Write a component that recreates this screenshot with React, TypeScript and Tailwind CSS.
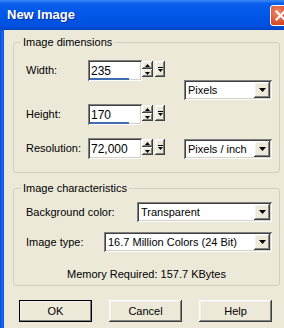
import React from "react";

const raised =
  "bg-[#ECE9D8] shadow-[inset_-1px_-1px_#404040,inset_1px_1px_#ffffff,inset_-2px_-2px_#808080,inset_2px_2px_#F4F2EA]";
const sunken =
  "bg-white shadow-[inset_1px_1px_#808080,inset_-1px_-1px_#ffffff,inset_2px_2px_#404040,inset_-2px_-2px_#D4D0C8]";

function Tri({ up = false, w = 5, h = 3 }: { up?: boolean; w?: number; h?: number }) {
  return (
    <svg width={w} height={h} viewBox={`0 0 ${w} ${h}`} className="block">
      <polygon points={up ? `0,${h} ${w},${h} ${w / 2},0` : `0,0 ${w},0 ${w / 2},${h}`} fill="#000" />
    </svg>
  );
}

function SpinField({ value, bar }: { value: string; bar?: boolean }) {
  return (
    <div className="flex items-start h-[21px]">
      <div className={`relative w-[54px] h-[21px] ${sunken} pl-[3px] flex items-center text-[12px]`}>
        {value}
        {bar && <div className="absolute left-[2px] bottom-[1px] w-[39px] h-[2px] bg-[#3F6DAE]" />}
      </div>
      <div className="flex flex-col mt-[1px]">
        <div className={`w-[11px] h-[8px] ${raised} flex items-center justify-center`}>
          <Tri up />
        </div>
        <div className={`w-[11px] h-[8px] ${raised} flex items-center justify-center`}>
          <Tri />
        </div>
      </div>
      <div className={`ml-[2px] mt-[1px] w-[10px] h-[16px] ${raised} flex flex-col items-center justify-center gap-[1px]`}>
        <div className="w-[5px] h-[1px] bg-black" />
        <Tri />
      </div>
    </div>
  );
}

function Select({ value, w }: { value: string; w: string }) {
  return (
    <div className={`${w} h-[20px] ${sunken} flex items-center pl-[4px] pr-[2px]`}>
      <span className="flex-1 truncate">{value}</span>
      <div className={`w-[16px] h-[16px] ${raised} flex items-center justify-center`}>
        <Tri w={7} h={4} />
      </div>
    </div>
  );
}

function Group({ title, className, children }: { title: string; className: string; children: React.ReactNode }) {
  return (
    <div className={`relative w-[267px] border border-[#D0D0BF] rounded-[3px] ${className}`}>
      <span className="absolute left-[7px] -top-[8px] px-[2px] bg-[#ECE9D8] leading-[14px]">{title}</span>
      {children}
    </div>
  );
}

function Button({ label, def }: { label: string; def?: boolean }) {
  return (
    <div
      className={`w-[73px] h-[22px] flex items-center justify-center ${raised} ${
        def ? "outline outline-1 outline-black -outline-offset-1" : ""
      }`}
    >
      {label}
    </div>
  );
}

export default function App() {
  return (
    <div className="relative w-[284px] h-[328px] overflow-hidden bg-[#ECE9D8] text-black font-['Liberation_Sans',Arial,sans-serif] text-[11px]">
      {/* Title bar */}
      <div className="relative h-[30px] flex items-center pl-[7px] bg-[linear-gradient(to_bottom,#3A8AF7_0%,#0A5EEC_12%,#0056E6_50%,#0051E0_85%,#0043C2_100%)]">
        <span className="text-white font-bold text-[13px] [text-shadow:1px_1px_#0B2A9A]">New Image</span>
        <div className="absolute left-[270px] top-[5px] w-[21px] h-[21px] rounded-[3px] border border-white bg-[radial-gradient(circle_at_35%_35%,#F08A6A,#D8502C_60%,#B8391C)] flex items-center justify-center">
          <svg width="11" height="11" viewBox="0 0 11 11">
            <path d="M1.5 1.5 L9.5 9.5 M9.5 1.5 L1.5 9.5" stroke="#fff" strokeWidth="2" strokeLinecap="square" />
          </svg>
        </div>
      </div>

      <div className="flex h-[298px]">
        <div className="w-[4px] bg-[linear-gradient(to_right,#0A49D6,#1A6AF0,#0B50E0)]" />
        <div className="flex-1 pl-[9px] pt-[12px]">
          <Group title="Image dimensions" className="h-[131px] pt-[17px] pl-[12px]">
            <div className="flex">
              <div className="flex flex-col">
                <div className="flex items-center">
                  <span className="w-[62px]">Width:</span>
                  <SpinField value="235" bar />
                </div>
                <div className="flex items-center mt-[23px]">
                  <span className="w-[62px]">Height:</span>
                  <SpinField value="170" bar />
                </div>
                <div className="flex items-center mt-[13px]">
                  <span className="w-[62px]">Resolution:</span>
                  <SpinField value="72,000" />
                </div>
              </div>
              <div className="flex flex-col ml-[19px] pt-[20px]">
                <Select value="Pixels" w="w-[88px]" />
                <div className="mt-[39px]">
                  <Select value="Pixels / inch" w="w-[88px]" />
                </div>
              </div>
            </div>
          </Group>

          <Group title="Image characteristics" className="h-[98px] mt-[15px] pt-[13px] pl-[12px]">
            <div className="flex items-center">
              <span className="w-[111px]">Background color:</span>
              <Select value="Transparent" w="w-[135px]" />
            </div>
            <div className="flex items-center mt-[10px]">
              <span className="w-[78px]">Image type:</span>
              <Select value="16.7 Million Colors (24 Bit)" w="w-[168px]" />
            </div>
            <div className="mt-[14px] text-center pr-[12px]">Memory Required: 157.7 KBytes</div>
          </Group>

          <div className="flex gap-[17px] mt-[14px] pl-[6px]">
            <Button label="OK" def />
            <Button label="Cancel" />
            <Button label="Help" />
          </div>
        </div>
      </div>
    </div>
  );
}
